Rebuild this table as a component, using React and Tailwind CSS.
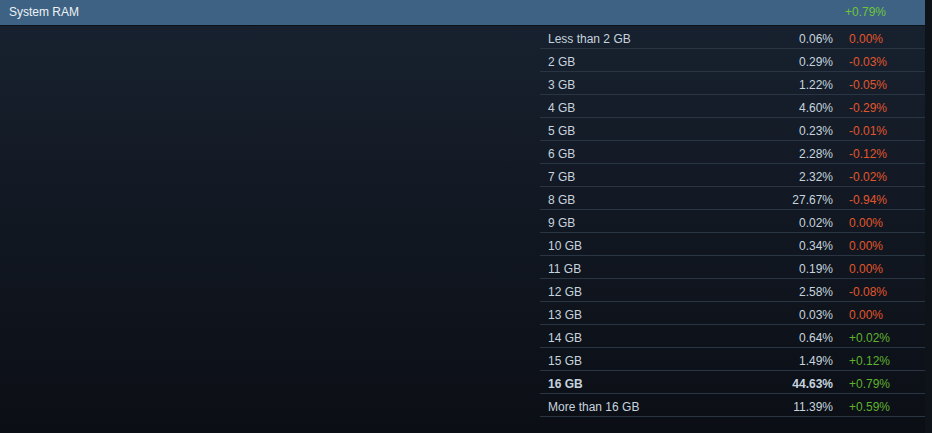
import React from "react";

const rows = [
    { label: "Less than 2 GB", pct: "0.06%", change: "0.00%", up: false },
    { label: "2 GB", pct: "0.29%", change: "-0.03%", up: false },
    { label: "3 GB", pct: "1.22%", change: "-0.05%", up: false },
    { label: "4 GB", pct: "4.60%", change: "-0.29%", up: false },
    { label: "5 GB", pct: "0.23%", change: "-0.01%", up: false },
    { label: "6 GB", pct: "2.28%", change: "-0.12%", up: false },
    { label: "7 GB", pct: "2.32%", change: "-0.02%", up: false },
    { label: "8 GB", pct: "27.67%", change: "-0.94%", up: false },
    { label: "9 GB", pct: "0.02%", change: "0.00%", up: false },
    { label: "10 GB", pct: "0.34%", change: "0.00%", up: false },
    { label: "11 GB", pct: "0.19%", change: "0.00%", up: false },
    { label: "12 GB", pct: "2.58%", change: "-0.08%", up: false },
    { label: "13 GB", pct: "0.03%", change: "0.00%", up: false },
    { label: "14 GB", pct: "0.64%", change: "+0.02%", up: true },
    { label: "15 GB", pct: "1.49%", change: "+0.12%", up: true },
    { label: "16 GB", pct: "44.63%", change: "+0.79%", up: true, bold: true },
    { label: "More than 16 GB", pct: "11.39%", change: "+0.59%", up: true },
];

function StatRow({ row }) {
    const weight = row.bold ? " font-bold" : "";
    return (
        <div className="flex h-[23px] items-center border-b border-[#2a3544] pt-[3px] text-[12px]">
            <div className={"flex-1 pl-2 text-[#c6d4df]" + weight}>{row.label}</div>
            <div className={"text-right text-[#c6d4df]" + weight}>{row.pct}</div>
            <div className={"ml-4 w-[76px] " + (row.up ? "text-[#5fb22c]" : "text-[#e0562c]")}>{row.change}</div>
        </div>
    );
}

export default function App() {
    return (
        <div className="flex h-[433px] w-[932px] overflow-hidden bg-[#0e131a] font-['Liberation_Sans',Arial,sans-serif]">
            <div className="flex w-[925px] flex-col bg-gradient-to-b from-[#182230] to-[#0b0e15]">
                <div className="flex h-[26px] items-center border-b border-[#0c1219] bg-[#3d6283] pb-[2px] text-[12px]">
                    <div className="flex-1 pl-[9px] text-[#eef2f5]">System RAM</div>
                    <div className="w-[80px] text-[#6ec53a]">+0.79%</div>
                </div>
                <div className="flex">
                    <div className="w-[540px]" />
                    <div className="flex-1">
                        {rows.map((row) => (
                            <StatRow key={row.label} row={row} />
                        ))}
                    </div>
                </div>
            </div>
            <div className="flex-1" />
        </div>
    );
}
